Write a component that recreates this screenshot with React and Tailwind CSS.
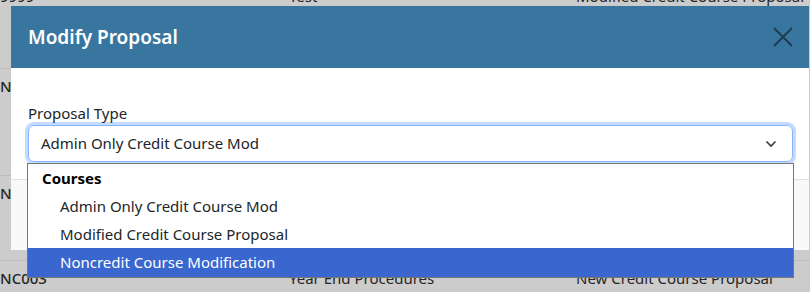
import React from "react";

const rows = [
  { code: "9999", title: "Test", type: "Modified Credit Course Proposal", h: "h-[83px]", pt: "pt-[0px]", mt: "-mt-[14px]" },
  { code: "NC001", title: "Sample", type: "Noncredit Course Modification", h: "h-[107px]", pt: "pt-[7px]" },
  { code: "NC002", title: "Sample", type: "Noncredit Course Modification", h: "h-[85px]", pt: "pt-[7px]" },
  { code: "NC003", title: "Year End Procedures", type: "New Credit Course Proposal", h: "h-[40px]", pt: "pt-[7px]" },
];

const App = () => {
  return (
    <div className="relative w-[810px] h-[292px] overflow-hidden bg-[#cccccc] font-['Noto_Sans',sans-serif]">
      {/* table behind the backdrop */}
      <div className="flex flex-col">
        {rows.map((r, i) => (
          <div key={i} className={`${r.h} ${r.pt} ${r.mt || ""} flex items-start border-b border-[#bdbdbd] text-[15px] leading-[20px] text-[#262626]`}>
            <div className="w-[289px] font-medium">{r.code}</div>
            <div className="w-[287px]">{r.title}</div>
            <div className="flex-1 whitespace-nowrap">{r.type}</div>
          </div>
        ))}
      </div>

      {/* modal */}
      <div className="absolute left-[11px] top-[6px] w-[798px] bg-white">
        <div className="h-[62px] bg-[#38769f] flex items-center justify-between pl-[17px] pr-[16px]">
          <h2 className="text-[19px] font-semibold text-white">Modify Proposal</h2>
          <button className="text-[#1b3a50]">
            <svg width="20" height="20" viewBox="0 0 20 20" fill="none" stroke="currentColor" strokeWidth="1.8">
              <path d="M1 1 L19 19 M19 1 L1 19" />
            </svg>
          </button>
        </div>
        <div className="px-[17px] pt-[35px] pb-[17px] h-[111px]">
          <label className="block text-[15px] text-[#212529] leading-[20px] mb-[2px]">Proposal Type</label>
          <div className="w-[765px] h-[37px] flex items-center justify-between rounded-[6px] border border-[#86b7fe] shadow-[0_0_0_3px_rgba(13,110,253,0.25)] pl-[12px] pr-[15px]">
            <span className="text-[15px] text-[#212529]">Admin Only Credit Course Mod</span>
            <svg width="12" height="8" viewBox="0 0 12 8" fill="none" stroke="#343a40" strokeWidth="1.6">
              <path d="M1.5 1.5 L6 6 L10.5 1.5" />
            </svg>
          </div>
        </div>
        <div className="h-[71px] bg-[#f8f9fa] border-t border-[#dee2e6]"></div>
      </div>

      {/* open select list */}
      <div className="absolute left-[27px] top-[163px] w-[767px] bg-white border border-[#767676] text-[15px]">
        <div className="h-[28px] flex items-center pl-[14px] font-bold text-black">Courses</div>
        <div className="h-[28px] flex items-center pl-[32px] text-[#212529]">Admin Only Credit Course Mod</div>
        <div className="h-[28px] flex items-center pl-[32px] text-[#212529]">Modified Credit Course Proposal</div>
        <div className="h-[29px] flex items-center pl-[32px] bg-[#3966cf] text-white">Noncredit Course Modification</div>
      </div>
    </div>
  );
};

export default App;
